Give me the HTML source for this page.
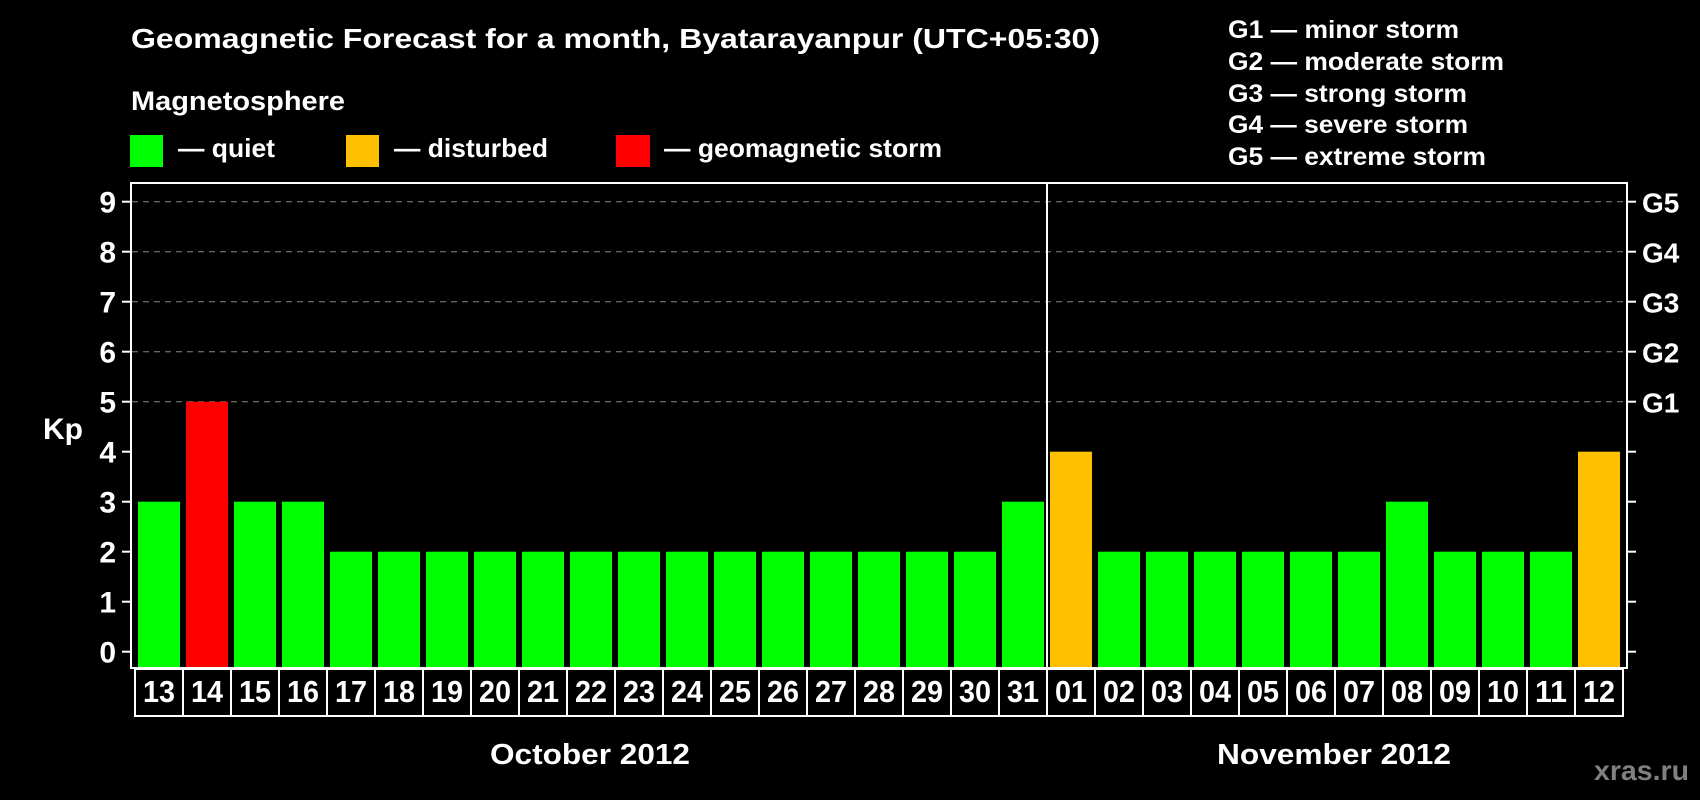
<!DOCTYPE html>
<html><head><meta charset="utf-8"><style>
html,body{margin:0;padding:0;background:#000;width:1700px;height:800px;overflow:hidden}
svg{display:block}
text{font-family:"Liberation Sans",Arial,sans-serif;font-weight:bold;fill:#fff}
</style></head><body>
<svg width="1700" height="800" viewBox="0 0 1700 800" xmlns="http://www.w3.org/2000/svg">
<text x="131" y="48" font-size="28" textLength="969" lengthAdjust="spacingAndGlyphs">Geomagnetic Forecast for a month, Byatarayanpur (UTC+05:30)</text>
<text x="131" y="110" font-size="27" textLength="214" lengthAdjust="spacingAndGlyphs">Magnetosphere</text>
<rect x="130" y="135" width="33" height="32" fill="#00ff00"/>
<text x="178" y="157" font-size="26" textLength="97" lengthAdjust="spacingAndGlyphs">— quiet</text>
<rect x="346" y="135" width="33" height="32" fill="#ffc000"/>
<text x="394" y="157" font-size="26" textLength="154" lengthAdjust="spacingAndGlyphs">— disturbed</text>
<rect x="616" y="135" width="34" height="32" fill="#ff0000"/>
<text x="664" y="157" font-size="26" textLength="278" lengthAdjust="spacingAndGlyphs">— geomagnetic storm</text>
<g font-size="25">
<text x="1228" y="38" textLength="231" lengthAdjust="spacingAndGlyphs">G1 — minor storm</text>
<text x="1228" y="70" textLength="276" lengthAdjust="spacingAndGlyphs">G2 — moderate storm</text>
<text x="1228" y="102" textLength="239" lengthAdjust="spacingAndGlyphs">G3 — strong storm</text>
<text x="1228" y="133" textLength="240" lengthAdjust="spacingAndGlyphs">G4 — severe storm</text>
<text x="1228" y="165" textLength="258" lengthAdjust="spacingAndGlyphs">G5 — extreme storm</text>
</g>
<g stroke="#888" stroke-width="1" stroke-dasharray="6,5">
<line x1="132" y1="201.7" x2="1627" y2="201.7"/>
<line x1="132" y1="251.7" x2="1627" y2="251.7"/>
<line x1="132" y1="301.7" x2="1627" y2="301.7"/>
<line x1="132" y1="351.7" x2="1627" y2="351.7"/>
<line x1="132" y1="401.7" x2="1627" y2="401.7"/>
</g>
<g id="bars"></g>
<rect x="131" y="183" width="1496" height="485" fill="none" stroke="#fff" stroke-width="2"/>
<line x1="1047" y1="183" x2="1047" y2="668" stroke="#fff" stroke-width="2"/>
<g id="axes" stroke="#fff" stroke-width="2"></g>
<g id="labels" font-size="30"></g>
<text x="43" y="439" font-size="30">Kp</text>
<g id="cells"></g>
<text x="590" y="764" font-size="29" text-anchor="middle" textLength="200" lengthAdjust="spacingAndGlyphs">October 2012</text>
<text x="1334" y="764" font-size="29" text-anchor="middle" textLength="234" lengthAdjust="spacingAndGlyphs">November 2012</text>
<text x="1689" y="780" font-size="28" text-anchor="end" style="fill:#808080" textLength="95" lengthAdjust="spacingAndGlyphs">xras.ru</text>
</svg>
<script>
(function(){
var NS="http://www.w3.org/2000/svg";
function el(p,t,a,txt){var e=document.createElementNS(NS,t);for(var k in a)e.setAttribute(k,a[k]);if(txt)e.textContent=txt;document.getElementById(p).appendChild(e);}
var days=["13","14","15","16","17","18","19","20","21","22","23","24","25","26","27","28","29","30","31","01","02","03","04","05","06","07","08","09","10","11","12"];
var kp=[3,5,3,3,2,2,2,2,2,2,2,2,2,2,2,2,2,2,3,4,2,2,2,2,2,2,3,2,2,2,4];
for(var i=0;i<31;i++){
 var k=kp[i],c=k>=5?"#ff0000":(k==4?"#ffc000":"#00ff00");
 var yt=651.7-50*k;
 el("bars","rect",{x:138+48*i,y:yt,width:42,height:668-yt,fill:c});
 el("cells","rect",{x:135+48*i,y:669,width:48,height:47,fill:"none",stroke:"#fff","stroke-width":2});
 el("cells","text",{x:159+48*i,y:702,"font-size":"31","text-anchor":"middle",textLength:"32",lengthAdjust:"spacingAndGlyphs"},days[i]);
}
for(var j=0;j<=9;j++){
 var y=651.7-50*j;
 el("axes","line",{x1:122,y1:y,x2:131,y2:y});
 el("axes","line",{x1:1627,y1:y,x2:1636,y2:y});
 el("labels","text",{x:116,y:y+11,"text-anchor":"end"},String(j));
 if(j>=5) el("labels","text",{x:1642,y:y+11,"font-size":"28"},"G"+(j-4));
}
})();
</script>
</body></html>
